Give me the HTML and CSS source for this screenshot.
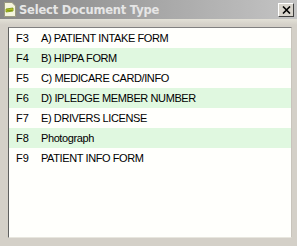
FILE: index.html
```html
<!DOCTYPE html>
<html lang="en">
  <head>
    <meta charset="UTF-8" />
    <meta name="viewport" content="width=device-width, initial-scale=1.0" />
    <title>Select Document Type</title>
    <link rel="stylesheet" href="styles.css">
  </head>
  <body>
    <div class="window">
      <div class="titlebar">
        <svg class="title-icon" width="12" height="15" viewBox="0 0 12 15">
          <path d="M0.5 0.5 H8 L11.5 4 V14.5 H0.5 Z" fill="#f4f4dc" stroke="#9a9a80" />
          <path d="M2 7 L9 6 L9 9 L2 10 Z" fill="#d8d820" stroke="#6a8a10" stroke-width="0.8" />
          <path d="M3 8.2 H8" stroke="#4a7010" stroke-width="0.8" />
        </svg>
        <span class="title-text">Select Document Type</span>
        <button class="close-btn">
          <svg width="9" height="8" viewBox="0 0 9 8">
            <path d="M1 0.5 L8 7.5 M8 0.5 L1 7.5" stroke="#000" stroke-width="1.6" />
          </svg>
        </button>
      </div>
      <div class="body">
        <ul class="doc-list">
          <li class="doc-row"><span class="key">F3</span><span class="name">A) PATIENT INTAKE FORM</span></li>
          <li class="doc-row alt"><span class="key">F4</span><span class="name">B) HIPPA FORM</span></li>
          <li class="doc-row"><span class="key">F5</span><span class="name">C) MEDICARE CARD/INFO</span></li>
          <li class="doc-row alt"><span class="key">F6</span><span class="name">D) IPLEDGE MEMBER NUMBER</span></li>
          <li class="doc-row"><span class="key">F7</span><span class="name">E) DRIVERS LICENSE</span></li>
          <li class="doc-row alt"><span class="key">F8</span><span class="name">Photograph</span></li>
          <li class="doc-row"><span class="key">F9</span><span class="name">PATIENT INFO FORM</span></li>
        </ul>
      </div>
    </div>
  </body>
</html>
```

FILE: styles.css
```css
body {
  margin: 0;
  padding: 0;
  background-color: #d4d0c8;
  font-family: "Liberation Sans", Arial, sans-serif;
}

.window {
  width: 297px;
  height: 246px;
  display: flex;
  flex-direction: column;
  background-color: #d4d0c8;
}

.titlebar {
  height: 19px;
  display: flex;
  align-items: center;
  padding: 0 3px 0 4px;
  background: linear-gradient(to right, #868686, #c4c4c4);
}

.title-icon {
  flex: none;
  margin-right: 3px;
}

.title-text {
  flex: 1;
  color: #e6e6e6;
  font-family: "DejaVu Sans", Verdana, sans-serif;
  font-weight: bold;
  font-size: 11.5px;
  letter-spacing: -0.2px;
}

.close-btn {
  width: 16px;
  height: 14px;
  padding: 0;
  display: flex;
  align-items: center;
  justify-content: center;
  background-color: #d8d4cc;
  border: 1px solid;
  border-color: #fff #404040 #404040 #fff;
}

.body {
  flex: 1;
  padding: 8px 5px 8px 8px;
  display: flex;
  background: linear-gradient(to bottom, #e2e0d6 0, #d4d0c8 6px);
}

.doc-list {
  flex: 1;
  margin: 0;
  padding: 0;
  list-style: none;
  background-color: #fffffc;
  border-top: 1px solid #808080;
  border-left: 1px solid #606060;
  border-right: 1px solid #c8c4bc;
  border-bottom: 1px solid #e8e6de;
}

.doc-row {
  height: 20px;
  display: flex;
  align-items: center;
  font-size: 11px;
  letter-spacing: -0.4px;
  color: #000;
}

.doc-row.alt {
  background-color: #e0f8e0;
}

.key {
  width: 25px;
  padding-left: 7px;
  letter-spacing: 0;
}
```
